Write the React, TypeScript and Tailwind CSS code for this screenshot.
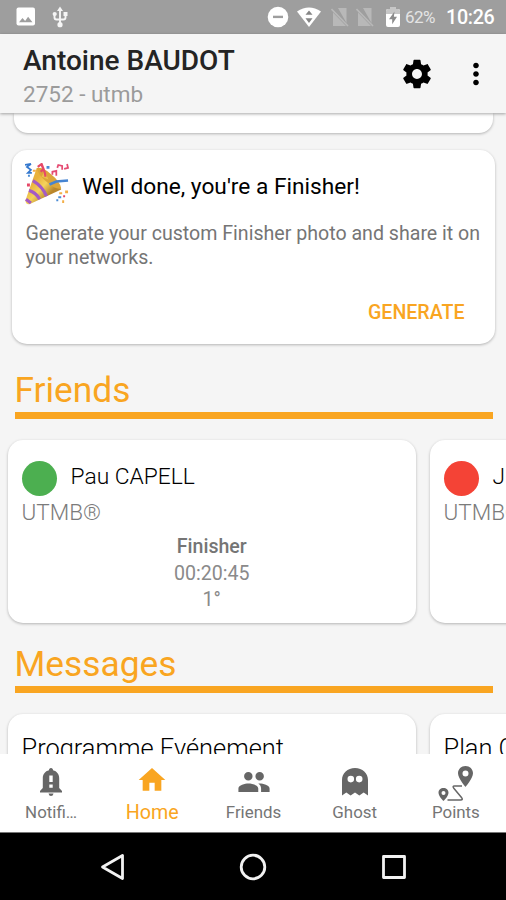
import type { ReactNode } from "react";
import { MdHome, MdMoreVert, MdPeople } from "react-icons/md";

function StatusBar() {
  return (
    <div className="flex h-[34px] shrink-0 items-center bg-[#9e9e9e] text-white">
      <svg className="ml-4 h-5 w-5" viewBox="0 0 20 20">
        <rect x=".5" y=".5" width="18.5" height="18" rx="2" fill="#fff" />
        <path d="M3 15.3 6.5 11l2.6 3 3-4.3 4.4 5.6z" fill="#9e9e9e" />
      </svg>
      <svg className="ml-[16px] h-[22px] w-4" viewBox="0 0 16 22" fill="none" stroke="#f5f5f5" strokeWidth="1.9">
        <path d="M8 4v13M2.500 8v3.500q0 2 2 2h7q2 0 2-2V8" />
        <path d="m5 5 3-4.500L11 5z" fill="#f5f5f5" stroke="none" />
        <circle cx="8" cy="18.700" r="2.600" fill="#f5f5f5" stroke="none" />
        <circle cx="2.700" cy="8" r="2.100" fill="#f5f5f5" stroke="none" />
        <path d="M11.500 6h4v4h-4z" fill="#f5f5f5" stroke="none" />
      </svg>
      <div className="ml-auto flex items-center">
        <svg className="h-[22px] w-[22px]" viewBox="0 0 22 22">
          <circle cx="11" cy="11" r="10.300" fill="#fff" />
          <path d="M6 9.700h10v2.400H6z" fill="#9e9e9e" />
        </svg>
        <svg className="ml-[8px] h-5 w-6" viewBox="0 0 24 20">
          <path d="M0 4.500Q12-3.500 24 4.500L12 20z" fill="#fff" />
          <path d="m12 3.500 3.500 4.300h-7zM12 16 8.500 11.200h7z" fill="#858585" />
        </svg>
        <svg className="ml-[10px] h-5 w-[18px]" viewBox="0 0 18 20">
          <path d="M7 1h8.500v15zM2 5.500 15 19H2z" fill="#b8b8b8" />
          <path d="m.5 2 16.500 17" stroke="#b8b8b8" strokeWidth="1.600" />
        </svg>
        <svg className="ml-[7px] h-5 w-[18px]" viewBox="0 0 18 20">
          <path d="M7 1h8.500v15zM2 5.500 15 19H2z" fill="#b8b8b8" />
          <path d="m.5 2 16.500 17" stroke="#b8b8b8" strokeWidth="1.600" />
        </svg>
        <svg className="ml-[12px] h-5 w-[14px]" viewBox="0 0 14 20">
          <path d="M4 0h6v2h2q2 0 2 2v14q0 2-2 2H2q-2 0-2-2V4q0-2 2-2h2z" fill="#fff" />
          <path d="M0 4q0-2 2-2h2V0h6v2h2q2 0 2 2v3H0z" fill="#c6c6c6" />
          <path d="M8.500 4.500 3 12.200h3.200v5L11 9.800H7.900z" fill="#8b8b8b" />
        </svg>
        <span className="ml-[5px] w-[31px] whitespace-nowrap text-[17px] leading-[36px] tracking-[-0.5px] text-[#e4e4e4]">62%</span>
        <span className="ml-[10px] mr-[11px] w-[49px] whitespace-nowrap text-[19.700px] font-medium leading-[37px] tracking-[-0.3px]">10:26</span>
      </div>
    </div>
  );
}

function Header() {
  return (
    <header className="relative z-10 flex h-[79px] shrink-0 items-center bg-[#f5f5f5] shadow-[0_1px_3px_rgba(0,0,0,0.35)]">
      <div className="ml-[23px] h-full whitespace-nowrap pt-[10px]">
        <h1 className="text-[28px] font-medium leading-[33px] text-[#242424]">Antoine BAUDOT</h1>
        <p className="text-[22.500px] leading-[34px] text-[#9b9b9b]">2752 - utmb</p>
      </div>
      <svg className="ml-auto h-[34px] w-[34px]" viewBox="0 0 24 24">
        <path d="M19.430 12.980c.04-.32.07-.64.07-.98s-.03-.66-.07-.98l2.110-1.650c.19-.15.24-.42.12-.64l-2-3.460c-.12-.22-.39-.3-.61-.22l-2.490 1c-.52-.4-1.080-.73-1.690-.98l-.38-2.650C14.460 2.180 14.250 2 14 2h-4c-.25 0-.46.18-.49.42l-.38 2.650c-.61.25-1.170.59-1.690.98l-2.490-1c-.23-.09-.49 0-.61.22l-2 3.460c-.13.22-.07.49.12.64l2.110 1.650c-.04.32-.07.65-.07.98s.03.66.07.98l-2.110 1.650c-.19.15-.24.42-.12.64l2 3.460c.12.22.39.3.61.22l2.490-1c.52.4 1.080.73 1.690.98l.38 2.650c.03.24.24.42.49.42h4c.25 0 .46-.18.49-.42l.38-2.650c.61-.25 1.170-.59 1.690-.98l2.490 1c.23.09.49 0 .61-.22l2-3.460c.12-.22.07-.49-.12-.64l-2.110-1.650zM12 15.500c-1.930 0-3.500-1.570-3.500-3.500s1.570-3.500 3.500-3.500 3.500 1.570 3.500 3.500-1.570 3.500-3.500 3.500z" />
      </svg>
      <MdMoreVert className="ml-[25px] mr-[13px] h-[34px] w-[34px] text-black" />
    </header>
  );
}

function PartyPopper() {
  return (
    <svg className="h-[44px] w-[46px]" viewBox="1 1 47 45" fill="none">
      <defs>
        <linearGradient id="cone" x1="10" y1="20" x2="25" y2="34" gradientUnits="userSpaceOnUse">
          <stop stopColor="#e9b23c" />
          <stop offset=".5" stopColor="#f5d35c" />
          <stop offset="1" stopColor="#b9862c" />
        </linearGradient>
      </defs>
      <path d="M13 6 1.500 39q0 5 4.500 4l32-15Q33 14 13 6z" fill="url(#cone)" />
      <path d="M13 6q6-1 14 6 10 8 11 15-5 2-14-6Q14 13 13 6z" fill="#dca63a" />
      <path d="M9 19q10 6 14 16M5 29q7 2 11 9M2 38l5 4" stroke="#a45bc4" strokeWidth="3.200" />
      <path d="m18 15 3-6 4 9" fill="#ecc04a" />
      <path d="m26 23 7-3 12-1" stroke="#4684d1" strokeWidth="2.600" />
      <path d="m1 3 6-1-4 3 4 3-3 3h4" stroke="#3478ce" strokeWidth="1.800" />
      <path d="m14 5 4-3 2 5-3 3M18 3l3 7 1 5" stroke="#e64868" strokeWidth="2.200" />
      <path d="M29 13v-3l4-1v5M34 6l1-3 4 1v4M41 7l4-1-1-4" stroke="#e54b72" strokeWidth="1.800" />
      <path d="M23 4h3v3h-3zM4 13h2v2H4zM33 38h2v2h-2zM35 35h3v2h-3z" fill="#498bd5" />
      <path d="M9 8h3v2H9zM42 29h3v3h-3zM36 31h3v2h-3zM39 39h2v3h-2z" fill="#f3ae47" />
      <path d="M3 22h3v3H3zM40 34h2v2h-2z" fill="#e64868" />
    </svg>
  );
}

function Section({ title }: { title: string }) {
  return (
    <div className="ml-[14.500px] w-[478.500px] border-b-[7px] border-[#f9a521]">
      <h2 className="h-[43px] whitespace-nowrap text-[35.300px] leading-[42px] text-[#f9a521]">{title}</h2>
    </div>
  );
}

function Card({ className, children }: { className: string; children?: ReactNode }) {
  return <div className={`shrink-0 bg-white shadow-[0_1px_3px_rgba(0,0,0,0.27)] ${className}`}>{children}</div>;
}

function FriendCard({ name, dot, children }: { name: string; dot: string; children?: ReactNode }) {
  return (
    <Card className="h-[183px] w-[407.500px] rounded-[15px] px-[13.500px] pt-[19px]">
      <div className="flex h-[39px] items-center whitespace-nowrap">
        <span className={`h-[35.500px] w-[35.500px] rounded-full ${dot}`} />
        <span className="mb-[3px] ml-[13.500px] text-[22.800px] font-light leading-[34px] text-black">{name}</span>
      </div>
      <p className="text-[22.500px] font-light leading-[28px] text-[#7b7b7b]">UTMB®</p>
      {children}
    </Card>
  );
}

function BellIcon() {
  return (
    <svg className="h-[28px] w-[24px]" viewBox="0 0 24 28" fill="#666">
      <path fillRule="evenodd" d="M12 0c1.300 0 2 1 2 2.200 4 1 6.200 4 6.200 8V20l2.800 3v1.500H1V23l2.800-3v-9.800c0-4 2.200-7 6.200-8C10 1 10.700 0 12 0zM10.300 7.500v6.500h3.400V7.500zm0 9v3.200h3.400v-3.200z" />
      <path d="M9.500 25.500h5q-.5 2.500-2.500 2.500t-2.500-2.500z" />
    </svg>
  );
}

function GhostIcon() {
  return (
    <svg className="h-[28px] w-[26px]" viewBox="0 0 26 28" fill="#666">
      <path fillRule="evenodd" d="M13 0C5.500 0 0 5 0 12v15.500l4.300-3 4.300 3 4.400-3 4.300 3 4.400-3 4.300 3V12C26 5 20.500 0 13 0zM8.800 7.800a3.300 3.300 0 1 1 0 6.600 3.300 3.300 0 0 1 0-6.600zm8.400 0a3.300 3.300 0 1 1 0 6.600 3.300 3.300 0 0 1 0-6.600z" />
    </svg>
  );
}

function RouteIcon() {
  return (
    <svg className="h-[36px] w-[36px]" viewBox="0 0 36 36" fill="#666">
      <path fillRule="evenodd" d="M27.500 0C23.200 0 20 3.200 20 7.300c0 5.200 7.500 13.700 7.500 13.700S35 12.500 35 7.300C35 3.200 31.800 0 27.500 0zm0 4.500a3 3 0 1 1 0 6 3 3 0 0 1 0-6z" />
      <path fillRule="evenodd" d="M5.500 22c-2.800 0-5 2-5 4.800 0 3.500 5 8.200 5 8.200s5-4.700 5-8.200c0-2.800-2.200-4.800-5-4.800zm0 3a2 2 0 1 1 0 4 2 2 0 0 1 0-4z" />
      <path d="M24 20h-7.500q-2.500 0-.5 2.500l7.500 9q2 2.500-1 2.500H9.500" fill="none" stroke="#666" strokeWidth="1.500" />
    </svg>
  );
}

function NavItem({ icon, label, active }: { icon: ReactNode; label: string; active?: boolean }) {
  return (
    <div className={`flex flex-1 flex-col items-center ${active ? "text-[#f9a521]" : "text-[#666]"}`}>
      <div className="flex h-[48px] items-center justify-center">{icon}</div>
      <span className={active ? "pl-px text-[19.700px] leading-[22px]" : "pl-px text-[16.900px] leading-[21px] text-[#757575]"}>{label}</span>
    </div>
  );
}

export default function App() {
  return (
    <div className="flex h-[900px] w-[506px] flex-col overflow-hidden bg-[#f5f5f5] font-[Roboto,sans-serif]">
      <StatusBar />
      <Header />
      <main className="flex h-[641px] shrink-0 flex-col overflow-hidden">
        <Card className="ml-[14px] h-[20px] w-[479px] rounded-b-[14px]" />
        <Card className="ml-[12px] mt-[17px] h-[194px] w-[483px] rounded-[15px] px-[13.500px] pt-[12px]">
          <div className="flex h-[48px] items-center whitespace-nowrap">
            <div className="-mt-[3px] -ml-[1px]"><PartyPopper /></div>
            <h3 className="ml-[11.500px] mt-[2px] text-[22.700px] leading-[48px] text-black">Well done, you're a Finisher!</h3>
          </div>
          <p className="mt-[12px] whitespace-nowrap text-[19.600px] leading-[23.500px] text-[#757575]">
            Generate your custom Finisher photo and share it on
            <br />
            your networks.
          </p>
          <button className="ml-auto mr-[17px] mt-[32px] block text-[19.600px] font-medium leading-[24px] text-[#f9a521]">GENERATE</button>
        </Card>
        <div className="mt-[25px]">
          <Section title="Friends" />
        </div>
        <div className="ml-[8px] mt-[21px] flex gap-[14.500px]">
          <FriendCard name="Pau CAPELL" dot="bg-[#4caf50]">
            <div className="mt-[8px] text-center text-[19.600px] leading-[26.500px] text-[#8a8a8a]">
              <p className="font-medium text-[#757575]">Finisher</p>
              <p>00:20:45</p>
              <p>1°</p>
            </div>
          </FriendCard>
          <FriendCard name="J" dot="bg-[#f44336]" />
        </div>
        <div className="mt-[20px]">
          <Section title="Messages" />
        </div>
        <div className="ml-[8px] mt-[21px] flex gap-[14.500px] whitespace-nowrap text-[25.400px] font-light leading-[34px] text-black">
          <Card className="h-[183px] w-[407.500px] rounded-[15px] px-[13.500px] pt-[17px]">Programme Evénement</Card>
          <Card className="h-[183px] w-[407.500px] rounded-[15px] px-[13.500px] pt-[17px]">Plan C</Card>
        </div>
      </main>
      <nav className="flex h-[79px] shrink-0 border-b border-[#777] bg-white">
        <NavItem icon={<div className="pt-[8px]"><BellIcon /></div>} label="Notifi…" />
        <NavItem icon={<div className="pl-[1px] pt-[3px]"><MdHome className="h-[32px] w-[32px]" /></div>} label="Home" active />
        <NavItem icon={<div className="pl-[1px] pt-[8px]"><MdPeople className="h-[34px] w-[34px]" /></div>} label="Friends" />
        <NavItem icon={<div className="pl-[1px] pt-[8px]"><GhostIcon /></div>} label="Ghost" />
        <NavItem icon={<div className="pl-[2px] pt-[11px]"><RouteIcon /></div>} label="Points" />
      </nav>
      <div className="flex h-[67px] shrink-0 items-center bg-black">
        <svg className="ml-[100px] h-[28px] w-[25px]" viewBox="0 0 25 28" fill="none" stroke="#f2f2f2" strokeWidth="2.800" strokeLinejoin="round">
          <path d="M22.500 2.500v23L2.500 14z" />
        </svg>
        <svg className="ml-[114px] h-[28px] w-[28px]" viewBox="0 0 28 28" fill="none" stroke="#f2f2f2" strokeWidth="2.800">
          <circle cx="14" cy="14" r="11.800" />
        </svg>
        <svg className="ml-[114px] h-[26px] w-[26px]" viewBox="0 0 26 26" fill="none" stroke="#f2f2f2" strokeWidth="2.800" strokeLinejoin="round">
          <path d="M2.500 2.500h21v21h-21z" />
        </svg>
      </div>
    </div>
  );
}
